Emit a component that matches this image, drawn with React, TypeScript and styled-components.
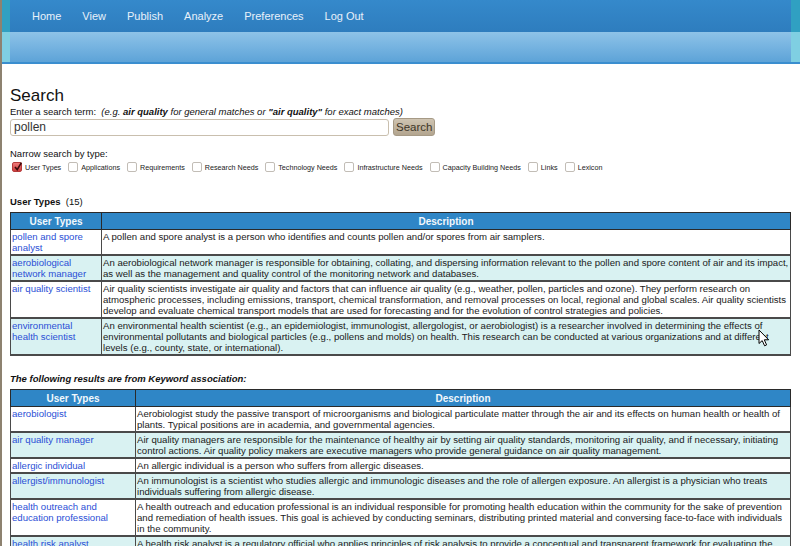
import React from 'react';
import styled, { createGlobalStyle } from 'styled-components';

const GlobalStyle = createGlobalStyle`
  html, body {
    margin: 0;
    padding: 0;
    background: #fff;
  }
  body {
    font-family: "Liberation Sans", Arial, sans-serif;
    color: #111;
  }
`;

const Page = styled.div`
  position: relative;
  min-height: 546px;
  border-left: 2px solid #8d8270;
  overflow: hidden;
`;

/* header bands */
const Band = styled.div<{ $light?: boolean }>`
  display: flex;
  height: ${(p) => (p.$light ? '30px' : '32px')};
  background: ${(p) =>
    p.$light
      ? 'linear-gradient(#8ec3e8, #5da3d8)'
      : 'linear-gradient(#3589cb, #2e7dbe)'};
  border-bottom: ${(p) => (p.$light ? '2px solid #3a8ecf' : 'none')};
`;

const Strip = styled.div<{ $light?: boolean; $w: number }>`
  width: ${(p) => p.$w}px;
  flex: none;
  background: ${(p) => (p.$light ? '#7fcfe2' : '#30a0c2')};
`;

const Nav = styled.nav`
  flex: 1;
  display: flex;
  align-items: center;
  gap: 21px;
  padding-left: 22px;
`;

const NavLink = styled.a`
  color: #e8f1fa;
  font-size: 11px;
  text-decoration: none;
  padding-bottom: 1px;
`;

const Content = styled.div`
  padding: 0 9px 0 8px;
`;

const Heading = styled.h1`
  margin: 22px 0 0;
  font-size: 17px;
  line-height: 20px;
  font-weight: normal;
`;

const Hint = styled.div`
  font-size: 9.5px;
  line-height: 11px;
  em b {
    font-weight: bold;
  }
`;

const SearchRow = styled.div`
  display: flex;
  align-items: center;
  gap: 4px;
  margin-top: 1px;
`;

const SearchInput = styled.input`
  box-sizing: border-box;
  width: 379px;
  height: 17px;
  margin: 0;
  padding: 0 3px;
  border: 1px solid #c9bfae;
  border-radius: 3px;
  font-family: "Liberation Sans", Arial, sans-serif;
  font-size: 12px;
  color: #333;
`;

const SearchButton = styled.button`
  box-sizing: border-box;
  height: 18px;
  padding: 0 2px;
  border: 1px solid #a69a86;
  border-radius: 3px;
  background: linear-gradient(#cfc4b2, #b3a58f);
  font-family: "Liberation Sans", Arial, sans-serif;
  font-size: 11.5px;
  color: #3e3628;
`;

const Label = styled.div`
  margin-top: 12px;
  font-size: 9.5px;
  line-height: 11px;
`;

const TypeList = styled.div`
  display: flex;
  align-items: center;
  margin-top: 2px;
  height: 12px;
`;

const TypeItem = styled.label`
  display: flex;
  align-items: center;
  margin-right: 5px;
  font-size: 7.2px;
  color: #222;
`;

const Box = styled.span<{ $checked?: boolean }>`
  box-sizing: border-box;
  width: 10px;
  height: 10px;
  margin: 0 3px 0 2px;
  border-radius: 2px;
  border: 1px solid ${(p) => (p.$checked ? '#b53a3a' : '#c2bdb6')};
  background: ${(p) =>
    p.$checked ? 'linear-gradient(#ee7a7a, #cc3c3c)' : '#fff'};
  position: relative;
  svg {
    position: absolute;
    left: 0;
    top: -2px;
  }
`;

const SectionTitle = styled.div<{ $italic?: boolean }>`
  margin-top: ${(p) => (p.$italic ? '17px' : '23px')};
  font-size: 9.5px;
  line-height: 11px;
  font-style: ${(p) => (p.$italic ? 'italic' : 'normal')};
  font-weight: ${(p) => (p.$italic ? 'bold' : 'normal')};
  b {
    font-weight: bold;
  }
`;

const Table = styled.table`
  width: 781px;
  margin-top: 5px;
  border-collapse: collapse;
  border: 1px solid #3a3a3a;
  font-size: 9.6px;
  line-height: 11px;
`;

const HeadCell = styled.th<{ $w?: number }>`
  width: ${(p) => (p.$w ? `${p.$w}px` : 'auto')};
  height: 16px;
  padding: 0;
  background: #2f86c6;
  color: #f2f8fc;
  font-size: 10px;
  font-weight: bold;
  text-align: center;
  border: 1px solid #2a2a2a;
`;

const Row = styled.tr<{ $alt?: boolean }>`
  background: ${(p) => (p.$alt ? '#d9f2f2' : '#fff')};
`;

const Cell = styled.td`
  vertical-align: top;
  padding: 1px 0 1px 1px;
  border: 1px solid #4a4a4a;
  border-bottom-width: 2px;
  color: #1a1a1a;
`;

const TypeLink = styled.a`
  color: #2b4fd6;
  text-decoration: none;
`;

const Cursor = styled.svg`
  position: absolute;
  left: 756px;
  top: 329px;
`;

const types = [
  'User Types',
  'Applications',
  'Requirements',
  'Research Needs',
  'Technology Needs',
  'Infrastructure Needs',
  'Capacity Building Needs',
  'Links',
  'Lexicon',
];

const direct = [
  {
    name: 'pollen and spore analyst',
    desc: 'A pollen and spore analyst is a person who identifies and counts pollen and/or spores from air samplers.',
  },
  {
    name: 'aerobiological network manager',
    desc: 'An aerobiological network manager is responsible for obtaining, collating, and dispersing information relevant to the pollen and spore content of air and its impact, as well as the management and quality control of the monitoring network and databases.',
  },
  {
    name: 'air quality scientist',
    desc: 'Air quality scientists investigate air quality and factors that can influence air quality (e.g., weather, pollen, particles and ozone). They perform research on atmospheric processes, including emissions, transport, chemical transformation, and removal processes on local, regional and global scales. Air quality scientists develop and evaluate chemical transport models that are used for forecasting and for the evolution of control strategies and policies.',
  },
  {
    name: 'environmental health scientist',
    desc: 'An environmental health scientist (e.g., an epidemiologist, immunologist, allergologist, or aerobiologist) is a researcher involved in determining the effects of environmental pollutants and biological particles (e.g., pollens and molds) on health. This research can be conducted at various organizations and at different levels (e.g., county, state, or international).',
  },
];

const keyword = [
  {
    name: 'aerobiologist',
    desc: 'Aerobiologist study the passive transport of microorganisms and biological particulate matter through the air and its effects on human health or health of plants. Typical positions are in academia, and governmental agencies.',
  },
  {
    name: 'air quality manager',
    desc: 'Air quality managers are responsible for the maintenance of healthy air by setting air quality standards, monitoring air quality, and if necessary, initiating control actions. Air quality policy makers are executive managers who provide general guidance on air quality management.',
  },
  {
    name: 'allergic individual',
    desc: 'An allergic individual is a person who suffers from allergic diseases.',
  },
  {
    name: 'allergist/immunologist',
    desc: 'An immunologist is a scientist who studies allergic and immunologic diseases and the role of allergen exposure. An allergist is a physician who treats individuals suffering from allergic disease.',
  },
  {
    name: 'health outreach and education professional',
    desc: 'A health outreach and education professional is an individual responsible for promoting health education within the community for the sake of prevention and remediation of health issues. This goal is achieved by conducting seminars, distributing printed material and conversing face-to-face with individuals in the community.',
  },
  {
    name: 'health risk analyst',
    desc: 'A health risk analyst is a regulatory official who applies principles of risk analysis to provide a conceptual and transparent framework for evaluating the health risks of exposure to airborne allergens and pollutants.',
  },
];

type Entry = { name: string; desc: string };

const ResultTable = ({ rows, firstWidth }: { rows: Entry[]; firstWidth: number }) => (
  <Table>
    <thead>
      <tr>
        <HeadCell $w={firstWidth}>User Types</HeadCell>
        <HeadCell>Description</HeadCell>
      </tr>
    </thead>
    <tbody>
      {rows.map((r, i) => (
        <Row key={r.name} $alt={i % 2 === 1}>
          <Cell>
            <TypeLink href="#">{r.name}</TypeLink>
          </Cell>
          <Cell>{r.desc}</Cell>
        </Row>
      ))}
    </tbody>
  </Table>
);

const App = () => (
  <Page>
    <GlobalStyle />
    <header>
      <Band>
        <Strip $w={8} />
        <Nav>
          {['Home', 'View', 'Publish', 'Analyze', 'Preferences', 'Log Out'].map((n) => (
            <NavLink key={n} href="#">
              {n}
            </NavLink>
          ))}
        </Nav>
        <Strip $w={9} />
      </Band>
      <Band $light>
        <Strip $w={8} $light />
        <div style={{ flex: 1 }} />
        <Strip $w={9} $light />
      </Band>
    </header>

    <Content>
      <Heading>Search</Heading>
      <Hint>
        Enter a search term:&nbsp;{' '}
        <em>
          (e.g. <b>air quality</b> for general matches or <b>"air quality"</b> for exact matches)
        </em>
      </Hint>
      <SearchRow>
        <SearchInput defaultValue="pollen" />
        <SearchButton>Search</SearchButton>
      </SearchRow>

      <Label>Narrow search by type:</Label>
      <TypeList>
        {types.map((t, i) => (
          <TypeItem key={t}>
            <Box $checked={i === 0}>
              {i === 0 && (
                <svg width="10" height="11" viewBox="0 0 10 11">
                  <path d="M2 6 L4.2 8.6 L8.4 1.6" fill="none" stroke="#3a0c0c" strokeWidth="1.6" />
                </svg>
              )}
            </Box>
            {t}
          </TypeItem>
        ))}
      </TypeList>

      <SectionTitle>
        <b>User Types</b>&nbsp; (15)
      </SectionTitle>
      <ResultTable rows={direct} firstWidth={90} />

      <SectionTitle $italic>The following results are from Keyword association:</SectionTitle>
      <ResultTable rows={keyword} firstWidth={124} />
    </Content>

    <Cursor width="12" height="18" viewBox="0 0 12 18">
      <path d="M1 1 L1 14.5 L4.2 11.6 L6.6 16.8 L8.6 15.9 L6.3 10.8 L10.6 10.8 Z" fill="#fff" stroke="#000" strokeWidth="1" strokeLinejoin="round" />
    </Cursor>
  </Page>
);

export default App;
